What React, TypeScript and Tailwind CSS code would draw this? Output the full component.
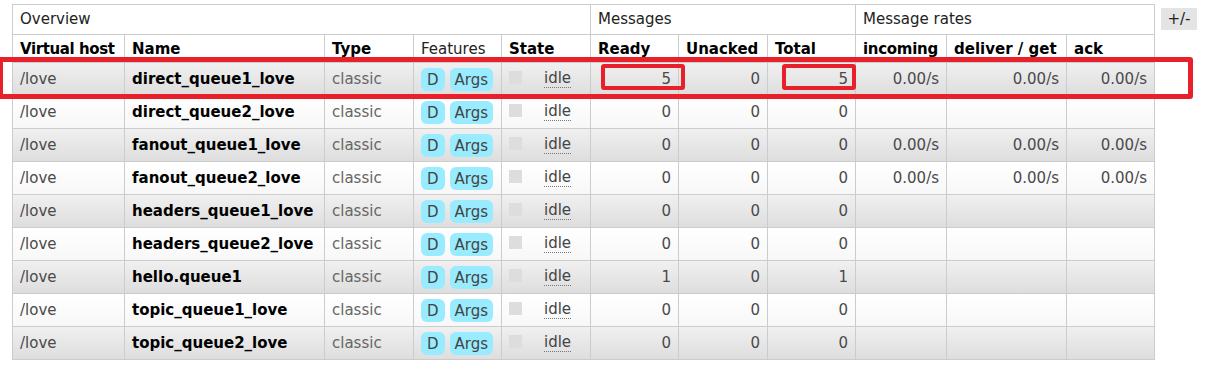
import React from 'react'

interface Queue {
  name: string
  ready: number
  unacked: number
  total: number
  rates?: string[]
}

const queues: Queue[] = [
  { name: 'direct_queue1_love', ready: 5, unacked: 0, total: 5, rates: ['0.00/s', '0.00/s', '0.00/s'] },
  { name: 'direct_queue2_love', ready: 0, unacked: 0, total: 0 },
  { name: 'fanout_queue1_love', ready: 0, unacked: 0, total: 0, rates: ['0.00/s', '0.00/s', '0.00/s'] },
  { name: 'fanout_queue2_love', ready: 0, unacked: 0, total: 0, rates: ['0.00/s', '0.00/s', '0.00/s'] },
  { name: 'headers_queue1_love', ready: 0, unacked: 0, total: 0 },
  { name: 'headers_queue2_love', ready: 0, unacked: 0, total: 0 },
  { name: 'hello.queue1', ready: 1, unacked: 0, total: 1 },
  { name: 'topic_queue1_love', ready: 0, unacked: 0, total: 0 },
  { name: 'topic_queue2_love', ready: 0, unacked: 0, total: 0 },
]

const widths = [112, 200, 89, 88, 89, 88, 89, 88, 91, 120, 88]

export default function App() {
  const th = 'border border-[#cccccc] px-[7px] text-left align-middle whitespace-nowrap'
  const td = 'border border-[#cccccc] px-[7px] align-middle whitespace-nowrap'

  return (
    <div className="relative w-[1216px] h-[366px] bg-white text-[15px] text-[#4a4a4a] font-['DejaVu_Sans',Verdana,sans-serif]">
      <div className="flex items-start pl-[12px] pt-[4px]">
        <table className="table-fixed border-collapse w-[1143px]">
          <colgroup>
            {widths.map((w, i) => (
              <col key={i} style={{ width: w }} />
            ))}
          </colgroup>
          <thead>
            <tr className="h-[30px] bg-white">
              <th colSpan={5} className={`${th} font-normal text-[#222]`}>Overview</th>
              <th colSpan={3} className={`${th} font-normal text-[#222]`}>Messages</th>
              <th colSpan={3} className={`${th} font-normal text-[#222]`}>Message rates</th>
            </tr>
            <tr className="h-[28px] bg-white text-black">
              <th className={`${th} font-bold tracking-[-0.4px] pt-[2px]`}>Virtual host</th>
              <th className={`${th} font-bold pt-[2px]`}>Name</th>
              <th className={`${th} font-bold pt-[2px]`}>Type</th>
              <th className={`${th} font-normal text-[#222] pt-[2px]`}>Features</th>
              <th className={`${th} font-bold pt-[2px]`}>State</th>
              <th className={`${th} font-bold pt-[2px]`}>Ready</th>
              <th className={`${th} font-bold pt-[2px]`}>Unacked</th>
              <th className={`${th} font-bold pt-[2px]`}>Total</th>
              <th className={`${th} font-bold tracking-[-0.3px] pt-[2px]`}>incoming</th>
              <th className={`${th} font-bold pt-[2px]`}>deliver / get</th>
              <th className={`${th} font-bold pt-[2px]`}>ack</th>
            </tr>
          </thead>
          <tbody>
            {queues.map((q, i) => (
              <tr
                key={q.name}
                className={`h-[33px] ${
                  i % 2 === 0
                    ? 'bg-gradient-to-b from-[#f0f0f0] to-[#dddddd]'
                    : 'bg-gradient-to-b from-[#ffffff] to-[#f7f7f7]'
                }`}
              >
                <td className={td}>/love</td>
                <td className={`${td} font-bold text-black`}>{q.name}</td>
                <td className={`${td} text-[#666]`}>classic</td>
                <td className={td}>
                  <div className="flex items-center gap-[5px] mt-[1px]">
                    <span className="rounded-[6px] bg-[#99ebff] px-[6px] h-[23px] leading-[24px] text-[#444]">D</span>
                    <span className="rounded-[6px] bg-[#99ebff] px-[5px] h-[23px] leading-[24px] text-[#444]">Args</span>
                  </div>
                </td>
                <td className={td}>
                  <div className="flex items-center">
                    <span className="inline-block w-[13px] h-[13px] bg-[#dddddd] -mt-[4px]" />
                    <span className="ml-[22px] text-[#444] border-b border-dotted border-[#777] leading-[17px]">idle</span>
                  </div>
                </td>
                <td className={`${td} text-right`}>{q.ready}</td>
                <td className={`${td} text-right`}>{q.unacked}</td>
                <td className={`${td} text-right`}>{q.total}</td>
                <td className={`${td} text-right`}>{q.rates?.[0]}</td>
                <td className={`${td} text-right`}>{q.rates?.[1]}</td>
                <td className={`${td} text-right`}>{q.rates?.[2]}</td>
              </tr>
            ))}
          </tbody>
        </table>
        <div className="ml-[6px] mt-[4px] w-[36px] h-[22px] bg-[#e4e4e4] text-[#222] text-center leading-[22px]">+/-</div>
      </div>

      {/* red annotation boxes */}
      <div className="absolute left-[-2px] top-[57px] w-[1195px] h-[42px] border-[5px] border-[#e8202a] rounded-[3px]" />
      <div className="absolute left-[601px] top-[64px] w-[84px] h-[26px] border-[4px] border-[#e8202a] rounded-[3px]" />
      <div className="absolute left-[782px] top-[64px] w-[74px] h-[26px] border-[4px] border-[#e8202a] rounded-[3px]" />
    </div>
  )
}
